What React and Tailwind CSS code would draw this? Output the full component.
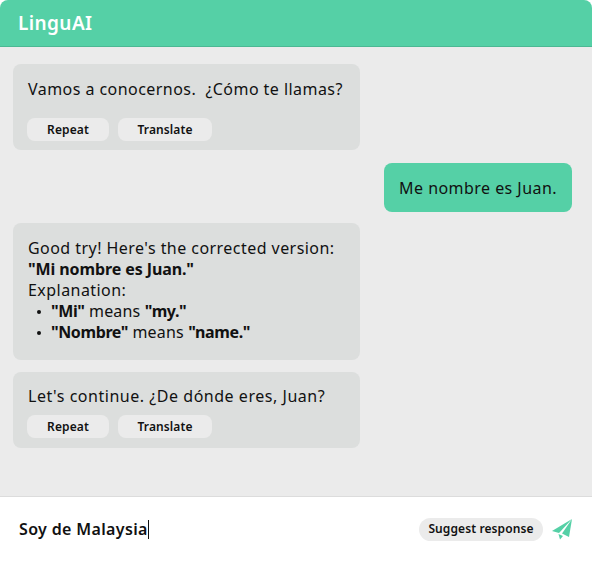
import React from 'react'

const ActionButton = ({ label, width }) => (
    <button className={`${width} h-[23px] rounded-lg bg-[#ebebeb] text-[12px] font-semibold tracking-[0.1px] text-[#111] flex items-center justify-center`}>
        {label}
    </button>
)

const Actions = () => (
    <div className="flex gap-[9px] -ml-px">
        <ActionButton label="Repeat" width="w-[82px]" />
        <ActionButton label="Translate" width="w-[94px]" />
    </div>
)

const Bubble = ({ className = '', children }) => (
    <div className={`w-[347px] rounded-lg bg-[#dcdedd] px-[15px] text-[16px] leading-[21px] tracking-[0.45px] text-[#111] ${className}`}>
        {children}
    </div>
)

const ListItem = ({ children }) => (
    <li className="flex items-center pl-[9px] tracking-[0.2px]">
        <span className="w-1 h-1 mr-[10px] rounded-full bg-[#111]"></span>
        <span>{children}</span>
    </li>
)

const Strong = ({ children }) => <b className="tracking-[-0.1px]">{children}</b>
const ListStrong = ({ children }) => <b className="tracking-[-0.4px]">{children}</b>

const App = () => {
    return (
        <div className="w-[592px] h-[561px] flex flex-col bg-white font-['Noto_Sans',sans-serif]">
            {/* Header */}
            <div className="h-[47px] shrink-0 flex items-center px-[18px] rounded-t-lg bg-[#55d0a6] border-b border-[#4bb893]">
                <h1 className="text-[19px] font-semibold tracking-[0.4px] text-white">LinguAI</h1>
            </div>

            {/* Messages */}
            <div className="flex-1 flex flex-col bg-[#ebebeb] pt-[17px] pl-[13px] pr-[20px] border-b border-[#dcdcdc]">
                <Bubble className="h-[86px] pt-[15px]">
                    <p className="mb-[18px]">Vamos a conocernos.&nbsp; ¿Cómo te llamas?</p>
                    <Actions />
                </Bubble>

                <div className="self-end mt-[13px] h-[49px] flex items-center rounded-lg bg-[#55d0a6] px-[15px] text-[16px] tracking-[0.45px] text-[#111]">
                    Me nombre es Juan.
                </div>

                <Bubble className="h-[137px] mt-[11px] pt-[15px]">
                    <p>Good try! Here's the corrected version:</p>
                    <p><Strong>"Mi nombre es Juan."</Strong></p>
                    <p>Explanation:</p>
                    <ul>
                        <ListItem><ListStrong>"Mi"</ListStrong> means <ListStrong>"my."</ListStrong></ListItem>
                        <ListItem><ListStrong>"Nombre"</ListStrong> means <ListStrong>"name."</ListStrong></ListItem>
                    </ul>
                </Bubble>

                <Bubble className="h-[76px] mt-[12px] pt-[14px]">
                    <p className="mb-[8px] tracking-[0.53px]">Let's continue. ¿De dónde eres, Juan?</p>
                    <Actions />
                </Bubble>
            </div>

            {/* Input */}
            <div className="h-[64px] shrink-0 flex items-center pl-[19px] pr-[19px] bg-white">
                <div className="flex-1 flex items-center text-[16px] font-semibold tracking-[0.35px] text-[#111]">
                    Soy de Malaysia
                    <span className="w-px h-[19px] bg-[#111]"></span>
                </div>
                <button className="h-[23px] w-[124px] rounded-full bg-[#ebebeb] text-[12px] font-semibold tracking-[0.1px] text-[#111] flex items-center justify-center">
                    Suggest response
                </button>
                <svg className="ml-[8px]" width="22" height="22" viewBox="0 0 22 22">
                    <path d="M1 13 L21 1 L8 15 Z" fill="#55d0a6" />
                    <path d="M21 1 L18 19 L11 15.5 Z" fill="#55d0a6" />
                    <path d="M7.5 16 L9 21.5 L12 18 Z" fill="#55d0a6" />
                </svg>
            </div>
        </div>
    )
}

export default App
